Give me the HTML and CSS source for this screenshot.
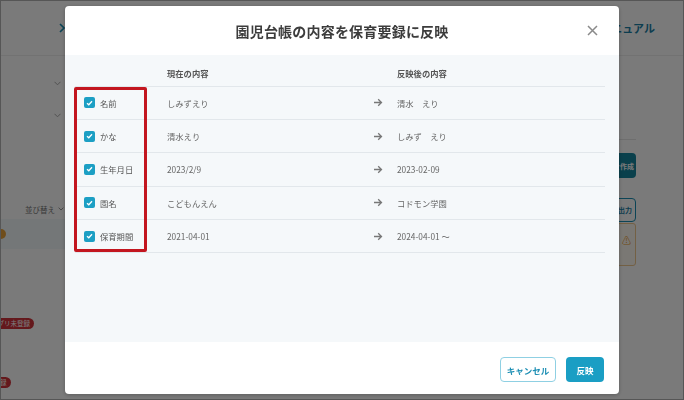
FILE: index.html
```html
<!DOCTYPE html>
<html lang="ja">

<head>

    <meta charset="UTF-8">
    <meta name="viewport" content="width=device-width, initial-scale=1.0">
    <title>園児台帳の内容を保育要録に反映</title>

    <link rel="stylesheet" href="styles.css">

</head>

<body>

    <div class="page">
        <div class="topbar">
            <svg class="nav-chevron" width="6" height="10" viewBox="0 0 6 10">
                <path d="M1 1l4 4-4 4" fill="none" stroke="currentColor" stroke-width="1.6" />
            </svg>
            <a class="manual-link">マニュアル</a>
        </div>

        <div class="content">
            <div class="sidebar">
                <div class="filter-select">
                    <svg width="7" height="5" viewBox="0 0 7 5"><path d="M0.5 0.8l3 3 3-3" fill="none" stroke="currentColor" stroke-width="1" /></svg>
                </div>
                <div class="filter-select">
                    <svg width="7" height="5" viewBox="0 0 7 5"><path d="M0.5 0.8l3 3 3-3" fill="none" stroke="currentColor" stroke-width="1" /></svg>
                </div>
                <div class="sort-row">
                    並び替え
                    <svg width="6" height="4" viewBox="0 0 7 5"><path d="M0.5 0.8l3 3 3-3" fill="none" stroke="currentColor" stroke-width="1" /></svg>
                </div>
                <div class="child-item selected">
                    <span class="status-dot"></span>
                </div>
                <div class="child-item second">
                    <span class="app-badge">アプリ未登録</span>
                </div>
                <div class="child-item third">
                    <span class="app-badge short">未登録</span>
                </div>
            </div>

            <div class="main"></div>

            <div class="aside">
                <div class="aside-rule"></div>
                <button class="aside-btn primary">要録を作成</button>
                <button class="aside-btn outline">一括出力</button>
                <div class="aside-notice">⚠</div>
            </div>
        </div>
    </div>

    <div class="backdrop">
        <div class="modal">
            <div class="modal-header">
                <h1 class="modal-title">園児台帳の内容を保育要録に反映</h1>
                <button class="modal-close" aria-label="閉じる">
                    <svg width="11" height="11" viewBox="0 0 11 11">
                        <path d="M1 1l9 9M10 1l-9 9" fill="none" stroke="currentColor" stroke-width="1.5" />
                    </svg>
                </button>
            </div>

            <div class="modal-body">
                <div class="table-wrap">
                    <table class="diff-table">
                        <colgroup>
                            <col class="col-field">
                            <col class="col-current">
                            <col class="col-arrow">
                            <col class="col-next">
                        </colgroup>
                        <thead>
                            <tr>
                                <th></th>
                                <th>現在の内容</th>
                                <th></th>
                                <th>反映後の内容</th>
                            </tr>
                        </thead>
                        <tbody id="diffRows"></tbody>
                    </table>
                    <div class="highlight"></div>
                </div>
            </div>

            <div class="modal-footer">
                <button class="btn btn-outline">キャンセル</button>
                <button class="btn btn-primary">反映</button>
            </div>
        </div>
    </div>

    <script>

        let rows = [
            ['名前', 'しみずえり', '清水　えり'],
            ['かな', '清水えり', 'しみず　えり'],
            ['生年月日', '2023/2/9', '2023-02-09'],
            ['園名', 'こどもんえん', 'コドモン学園'],
            ['保育期間', '2021-04-01', '2024-04-01 ～']
        ]

        let diffRows = document.getElementById('diffRows')

        let checkIcon = '<span class="checkbox"><svg width="7" height="6" viewBox="0 0 7 6">' +
            '<path d="M1 3.2l1.8 1.6L6 1.2" fill="none" stroke="#fff" stroke-width="1.3" /></svg></span>'

        let arrowIcon = '<svg width="10" height="9" viewBox="0 0 10 9">' +
            '<path d="M1 4.5h7.5M5.2 1.2l3.3 3.3-3.3 3.3" fill="none" stroke="currentColor" stroke-width="1.3" /></svg>'

        rows.forEach(row => {
            let tr = document.createElement('tr')
            tr.innerHTML =
                '<td><label class="field">' + checkIcon + '<span>' + row[0] + '</span></label></td>' +
                '<td>' + row[1] + '</td>' +
                '<td class="arrow">' + arrowIcon + '</td>' +
                '<td>' + row[2] + '</td>'
            diffRows.append(tr)
        })

    </script>

</body>

</html>
```

FILE: styles.css
```css
html,
body {
    width: 100%;
    height: 100%;
    margin: 0px;
    overflow: hidden;
}

body {
    position: relative;
    box-sizing: border-box;
    border: 1px solid #b5b5b5;
    background-color: #fff;
    font-family: "Noto Sans CJK JP", "Noto Sans", sans-serif;
    color: #555;
}

button {
    font-family: inherit;
    cursor: pointer;
}

/* page behind the dialog */

.page {
    height: 100%;
    display: flex;
    flex-direction: column;
}

.topbar {
    height: 54px;
    flex-shrink: 0;
    display: flex;
    align-items: center;
    justify-content: space-between;
    padding: 0 28px 0 58px;
    border-bottom: 1px solid #eee;
}

.nav-chevron {
    color: #1b8fb3;
}

.manual-link {
    color: #1b7fa6;
    font-size: 11px;
    font-weight: 700;
}

.content {
    flex: 1;
    display: flex;
}

.sidebar {
    width: 66px;
    flex-shrink: 0;
    padding-top: 11px;
    display: flex;
    flex-direction: column;
    background-color: #fff;
}

.filter-select {
    height: 32px;
    display: flex;
    align-items: center;
    justify-content: flex-end;
    padding-right: 6px;
    color: #aaa;
}

.sort-row {
    margin-top: 70px;
    height: 16px;
    display: flex;
    align-items: center;
    justify-content: flex-end;
    gap: 3px;
    padding-right: 3px;
    font-size: 7.5px;
    color: #777;
}

.child-item {
    height: 30px;
    display: flex;
    align-items: center;
}

.child-item.selected {
    margin-top: 2px;
    background-color: #f2f8fb;
}

.child-item.second {
    margin-top: 59px;
}

.child-item.third {
    margin-top: 29px;
}

.status-dot {
    width: 10px;
    height: 10px;
    margin-left: -5px;
    border-radius: 50%;
    background-color: #e9a23a;
}

.app-badge {
    margin-left: -26px;
    padding: 0 4px 0 16px;
    height: 11px;
    line-height: 11px;
    border-radius: 6px;
    background-color: #d2343c;
    color: #fff;
    font-size: 6.5px;
    white-space: nowrap;
}

.app-badge.short {
    margin-left: -30px;
}

.main {
    flex: 1;
}

.aside {
    width: 40px;
    margin-right: 47px;
    flex-shrink: 0;
    display: flex;
    flex-direction: column;
}

.aside-rule {
    margin-top: 83px;
    border-top: 1px solid #e6e6e6;
}

.aside-btn {
    margin-top: 13px;
    height: 25px;
    border-radius: 4px;
    font-size: 7px;
    font-weight: 700;
    white-space: nowrap;
    overflow: hidden;
    text-align: right;
    padding: 0 3px;
}

.aside-btn.primary {
    border: none;
    background-color: #16869f;
    color: #fff;
}

.aside-btn.outline {
    margin-top: 20px;
    height: 24px;
    border: 1px solid #1b8fb3;
    background-color: #fff;
    color: #1b7fa6;
}

.aside-notice {
    margin-top: 1px;
    height: 43px;
    box-sizing: border-box;
    border: 1px solid #f1c98f;
    border-radius: 3px;
    background-color: #fffaf2;
    color: #eb9b2c;
    font-size: 9px;
    text-align: right;
    padding: 10px 4px 0 0;
}

/* dialog */

.backdrop {
    position: fixed;
    inset: 0;
    background-color: rgba(0, 0, 0, 0.52);
    display: flex;
    align-items: center;
    justify-content: center;
}

.modal {
    width: 554px;
    height: 388px;
    display: flex;
    flex-direction: column;
    border-radius: 4px;
    overflow: hidden;
    background-color: #fff;
    box-shadow: 0 1px 4px rgba(0, 0, 0, 0.25);
}

.modal-header {
    position: relative;
    height: 49px;
    flex-shrink: 0;
    display: flex;
    align-items: center;
    justify-content: center;
}

.modal-title {
    margin: 0;
    font-size: 14px;
    font-weight: 700;
    color: #3c3c3c;
    letter-spacing: 0.2px;
}

.modal-close {
    position: absolute;
    right: 21px;
    top: 19px;
    padding: 0;
    border: none;
    background: none;
    color: #8a8a8a;
    line-height: 0;
}

.modal-body {
    flex: 1;
    padding: 0 14px 0 10px;
    background-color: #f5f8fa;
}

.modal-footer {
    height: 52px;
    flex-shrink: 0;
    display: flex;
    align-items: center;
    justify-content: flex-end;
    gap: 10px;
    padding: 3px 15px 0 0;
    box-sizing: border-box;
}

.btn {
    height: 25px;
    border-radius: 4px;
    font-size: 8.5px;
    font-weight: 700;
    padding: 0;
}

.btn-outline {
    width: 56px;
    border: 1px solid #8fd0e3;
    background-color: #fff;
    color: #1a8db3;
}

.btn-primary {
    width: 38px;
    border: none;
    background-color: #1a9ec4;
    color: #fff;
}

/* comparison table */

.table-wrap {
    position: relative;
}

.diff-table {
    width: 100%;
    border-collapse: collapse;
    table-layout: fixed;
    font-size: 8.3px;
}

.col-field {
    width: 92px;
}

.col-current {
    width: 206px;
}

.col-arrow {
    width: 24px;
}

.diff-table th {
    height: 31px;
    box-sizing: border-box;
    padding: 0 0 7px 0;
    vertical-align: bottom;
    text-align: left;
    font-weight: 600;
    color: #555;
    border-bottom: 1px solid #e2e7eb;
}

.diff-table td {
    height: 33.4px;
    box-sizing: border-box;
    padding: 0;
    color: #666;
    border-bottom: 1px solid #e2e7eb;
    white-space: pre;
}

.diff-table td.arrow {
    color: #777;
    line-height: 0;
}

.field {
    display: flex;
    align-items: center;
    gap: 5px;
    padding-left: 9px;
    color: #555;
}

.checkbox {
    width: 11px;
    height: 11px;
    border-radius: 2px;
    background-color: #1c9fc4;
    display: flex;
    align-items: center;
    justify-content: center;
}

.highlight {
    position: absolute;
    left: -1px;
    top: 32px;
    width: 73px;
    height: 165px;
    box-sizing: border-box;
    border: 3px solid #c3161f;
    border-radius: 2px;
}
```
